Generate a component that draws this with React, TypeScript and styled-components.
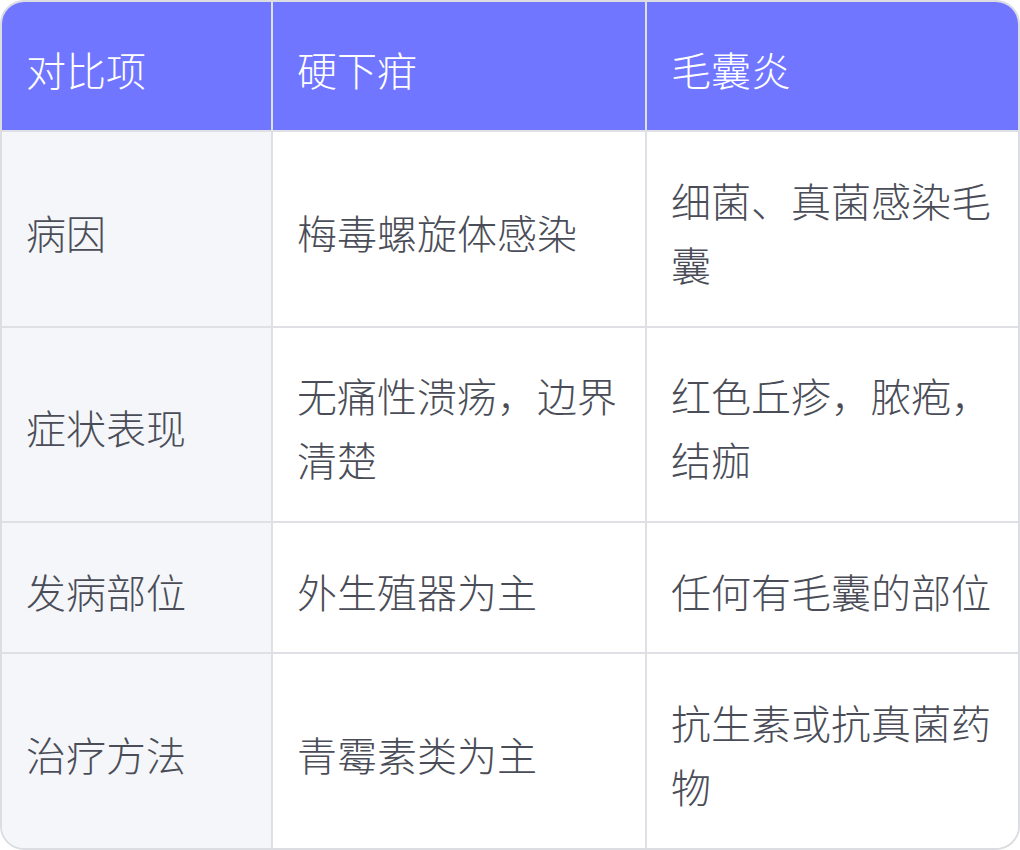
import styled, { createGlobalStyle } from 'styled-components';

const GlobalStyle = createGlobalStyle`
    html, body {
        margin: 0;
        padding: 0;
        background: #ffffff;
    }
    body {
        font-family: "Noto Sans CJK SC", "Noto Sans", sans-serif;
    }
`;

const Wrapper = styled.div`
    width: 1020px;
    height: 850px;
    box-sizing: border-box;
    border: 2px solid #dcdde2;
    border-radius: 24px;
    overflow: hidden;
`;

const Table = styled.table`
    width: 100%;
    height: 100%;
    border-collapse: separate;
    border-spacing: 0;
    table-layout: fixed;
`;

const HeadCell = styled.th<{ $last?: boolean }>`
    background: #7076ff;
    color: #ffffff;
    font-size: 40px;
    font-weight: 300;
    line-height: 64px;
    text-align: left;
    padding: 35px 24px 29px;
    border-right: ${p => (p.$last ? 'none' : '2px solid #dfe0e5')};
    border-bottom: 2px solid #dfe0e5;
`;

const Cell = styled.td<{ $first?: boolean; $last?: boolean; $bottom?: boolean }>`
    background: ${p => (p.$first ? '#f5f6fa' : '#ffffff')};
    color: #4a4d57;
    font-size: 40px;
    font-weight: 300;
    line-height: 64px;
    padding: 35px 24px 29px;
    vertical-align: middle;
    word-break: break-all;
    border-right: ${p => (p.$last ? 'none' : '2px solid #dfe0e5')};
    border-bottom: ${p => (p.$bottom ? 'none' : '2px solid #dfe0e5')};
`;

const rows = [
    ['病因', '梅毒螺旋体感染', '细菌、真菌感染毛囊'],
    ['症状表现', '无痛性溃疡，边界清楚', '红色丘疹，脓疱，结痂'],
    ['发病部位', '外生殖器为主', '任何有毛囊的部位'],
    ['治疗方法', '青霉素类为主', '抗生素或抗真菌药物'],
];

function App() {
    return (
        <>
            <GlobalStyle />
            <Wrapper>
                <Table>
                    <colgroup>
                        <col style={{ width: '271px' }} />
                        <col style={{ width: '374px' }} />
                        <col />
                    </colgroup>
                    <thead>
                        <tr>
                            <HeadCell>对比项</HeadCell>
                            <HeadCell>硬下疳</HeadCell>
                            <HeadCell $last>毛囊炎</HeadCell>
                        </tr>
                    </thead>
                    <tbody>
                        {rows.map((r, i) => (
                            <tr key={r[0]}>
                                <Cell $first $bottom={i === rows.length - 1}>{r[0]}</Cell>
                                <Cell $bottom={i === rows.length - 1}>{r[1]}</Cell>
                                <Cell $last $bottom={i === rows.length - 1}>{r[2]}</Cell>
                            </tr>
                        ))}
                    </tbody>
                </Table>
            </Wrapper>
        </>
    );
}

export default App;
